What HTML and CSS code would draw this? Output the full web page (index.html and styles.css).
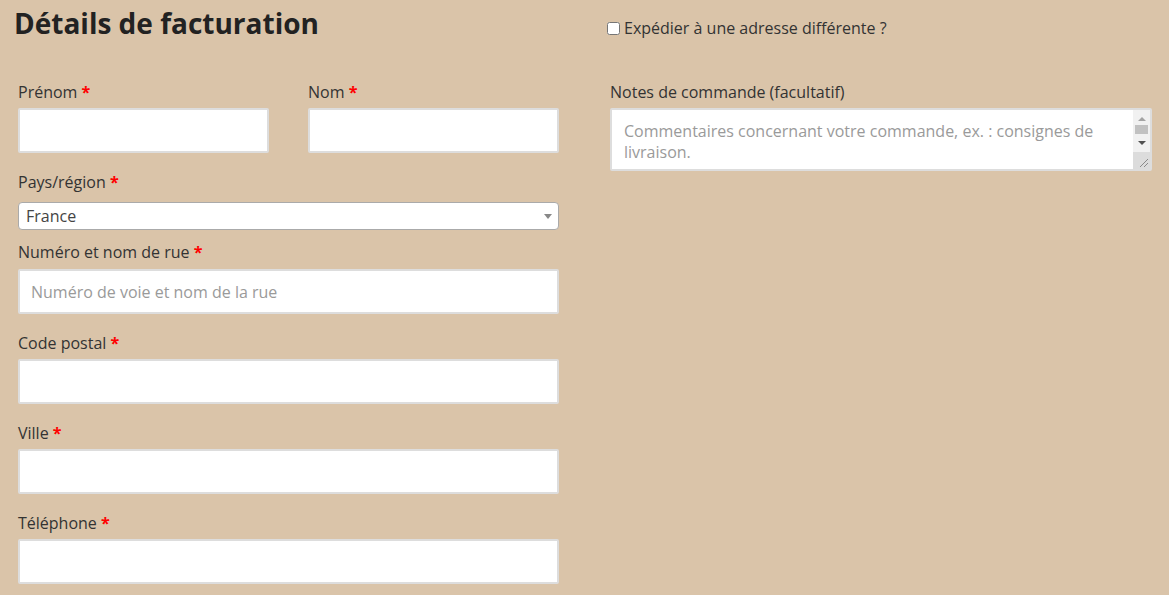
FILE: index.html
```html
<!DOCTYPE html>
<html lang="fr">
<head>
<meta charset="utf-8">
<title>Validation de commande</title>
<link rel="stylesheet" href="styles.css">
</head>
<body>
<form class="checkout">
  <section class="col billing">
    <div class="col-head">
      <h3 class="title">Détails de facturation</h3>
    </div>

    <div class="pair">
      <p class="field">
        <label for="first">Prénom <abbr class="req" title="obligatoire">*</abbr></label>
        <input class="text" id="first" type="text">
      </p>
      <p class="field">
        <label for="last">Nom <abbr class="req" title="obligatoire">*</abbr></label>
        <input class="text" id="last" type="text">
      </p>
    </div>

    <div class="field field-select">
      <label>Pays/région <abbr class="req" title="obligatoire">*</abbr></label>
      <div class="select">
        <span class="select-value">France</span>
        <span class="select-arrow"><b></b></span>
      </div>
    </div>

    <p class="field field-street">
      <label for="street">Numéro et nom de rue <abbr class="req" title="obligatoire">*</abbr></label>
      <input class="text" id="street" type="text" placeholder="Numéro de voie et nom de la rue">
    </p>

    <p class="field">
      <label for="zip">Code postal <abbr class="req" title="obligatoire">*</abbr></label>
      <input class="text" id="zip" type="text">
    </p>

    <p class="field">
      <label for="city">Ville <abbr class="req" title="obligatoire">*</abbr></label>
      <input class="text" id="city" type="text">
    </p>

    <p class="field">
      <label for="phone">Téléphone <abbr class="req" title="obligatoire">*</abbr></label>
      <input class="text" id="phone" type="tel">
    </p>
  </section>

  <section class="col shipping">
    <div class="col-head">
      <label class="ship-toggle"><input type="checkbox">Expédier à une adresse différente ?</label>
    </div>

    <p class="field">
      <label for="notes">Notes de commande (facultatif)</label>
      <span class="notes-box">
        <textarea id="notes" placeholder="Commentaires concernant votre commande, ex. : consignes de livraison."></textarea>
        <span class="scrollbar" aria-hidden="true">
          <span class="track">
            <i class="arrow up"></i>
            <i class="thumb"></i>
            <i class="arrow down"></i>
          </span>
          <span class="resizer">
            <svg width="17" height="17" viewBox="0 0 17 17">
              <path d="M7 15 L15 7 M11 15 L15 11" stroke="#8a8a8a" stroke-width="1" fill="none"/>
            </svg>
          </span>
        </span>
      </span>
    </p>
  </section>
</form>
</body>
</html>
```

FILE: styles.css
```css
* {
  box-sizing: border-box;
}

html,
body {
  margin: 0;
  height: 100%;
}

body {
  background: #dac4a9;
  color: #333333;
  font-family: "Open Sans", "Liberation Sans", sans-serif;
  font-size: 16px;
  line-height: 24px;
  overflow: hidden;
}

.checkout {
  display: grid;
  grid-template-columns: 541px 542px;
  column-gap: 51px;
  padding-left: 18px;
}

.col-head {
  height: 42px;
  margin-bottom: 38px;
  display: flex;
  align-items: flex-start;
}

.title {
  margin: 2px 0 0 -4px;
  font-size: 28px;
  line-height: 42px;
  font-weight: 700;
  color: #222222;
}

.ship-toggle {
  display: flex;
  align-items: center;
  margin: 16px 0 0 -7px;
  color: #333333;
}

.ship-toggle input {
  width: 13px;
  height: 13px;
  margin: 0 4px 0 4px;
}

/* form rows */
.field {
  margin: 0 0 17px;
}

.field label {
  display: block;
  margin-bottom: 4px;
}

.req {
  color: red;
  font-weight: 700;
  text-decoration: none;
  border: 0;
}

.pair {
  display: grid;
  grid-template-columns: 251px 251px;
  column-gap: 39px;
}

.text {
  display: block;
  width: 100%;
  height: 45px;
  margin: 0;
  padding: 0 11px;
  border: 2px solid #dddddd;
  border-radius: 2px;
  background: #ffffff;
  font: inherit;
  color: #333333;
  outline: none;
}

.text::placeholder,
textarea::placeholder {
  color: #9a9a9a;
  opacity: 1;
}

/* country select */
.field-select {
  margin-bottom: 10px;
}

.field-select label {
  margin-bottom: 8px;
}

.select {
  position: relative;
  height: 28px;
  border: 1px solid #aaaaaa;
  border-radius: 4px;
  background: #ffffff;
  padding-left: 7px;
  line-height: 26px;
  color: #444444;
}

.select-arrow {
  position: absolute;
  top: 0;
  right: 0;
  width: 20px;
  height: 26px;
}

.select-arrow b {
  position: absolute;
  left: 50%;
  top: 50%;
  margin: -2px 0 0 -4px;
  border-style: solid;
  border-width: 5px 4px 0;
  border-color: #888888 transparent transparent;
}

.field-street label {
  margin-bottom: 5px;
}

/* order notes */
.notes-box {
  position: relative;
  display: block;
  height: 63px;
}

textarea {
  display: block;
  width: 100%;
  height: 63px;
  margin: 0;
  padding: 11px 30px 0 12px;
  border: 2px solid #dddddd;
  border-radius: 2px;
  background: #ffffff;
  font: inherit;
  line-height: 21px;
  color: #333333;
  resize: none;
  overflow: hidden;
  outline: none;
}

.scrollbar {
  position: absolute;
  top: 2px;
  right: 2px;
  bottom: 2px;
  width: 17px;
  display: flex;
  flex-direction: column;
}

.track {
  position: relative;
  flex: 1;
  background: #f1f1f1;
}

.resizer {
  display: block;
  height: 17px;
  background: #dcdcdc;
}

.resizer svg {
  display: block;
}

.arrow {
  position: absolute;
  left: 5px;
  width: 0;
  height: 0;
  border-left: 4px solid transparent;
  border-right: 4px solid transparent;
}

.arrow.up {
  top: 7px;
  border-bottom: 4px solid #a3a3a3;
}

.arrow.down {
  top: 31px;
  border-top: 4px solid #505050;
}

.thumb {
  position: absolute;
  left: 2px;
  right: 2px;
  top: 15px;
  height: 9px;
  background: #c1c1c1;
}
```
